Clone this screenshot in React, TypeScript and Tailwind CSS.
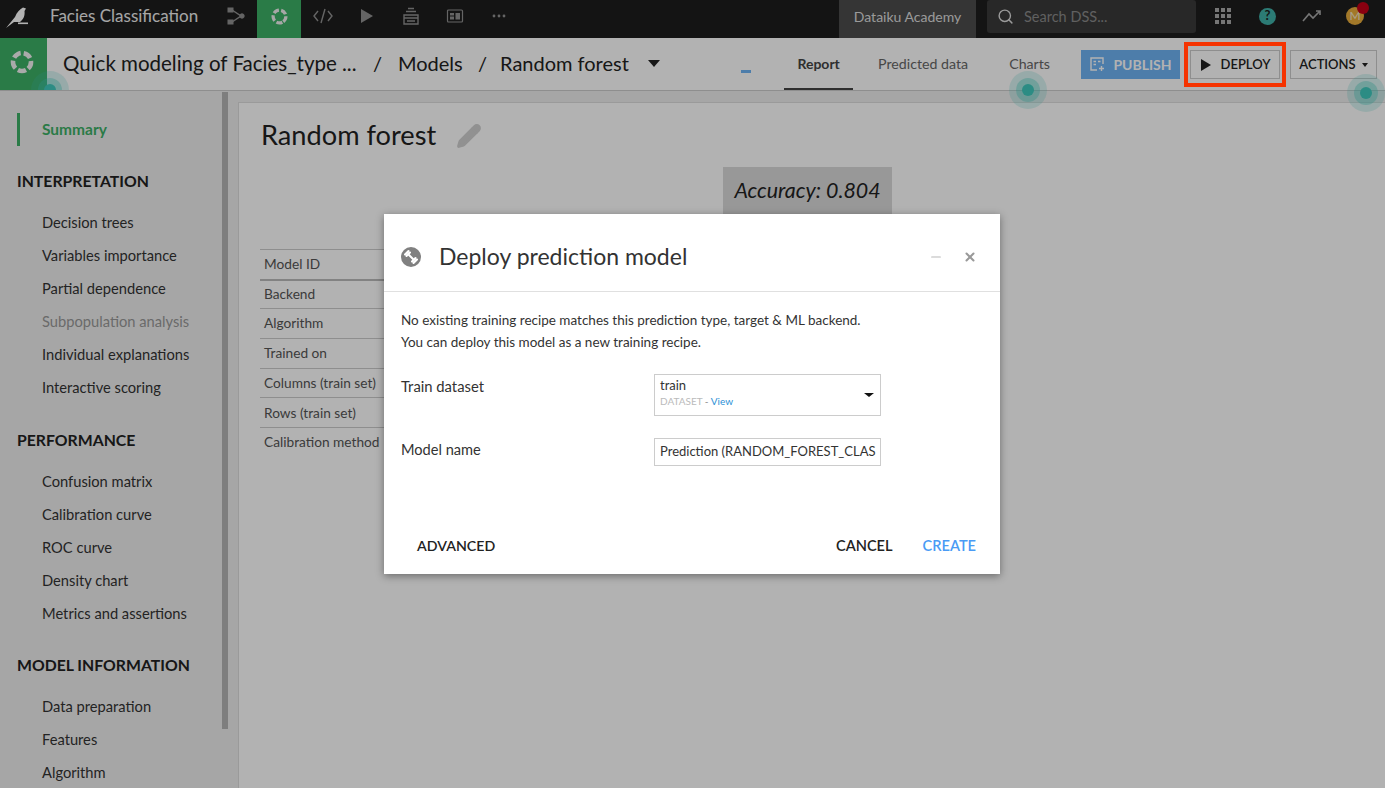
import { Search, Pencil, X, Minus } from "lucide-react";

const font = { fontFamily: 'Lato, "Noto Sans", sans-serif' };

type NavGroup = { title: string; items: string[] };

const NAV: NavGroup[] = [
  {
    title: "INTERPRETATION",
    items: [
      "Decision trees",
      "Variables importance",
      "Partial dependence",
      "Subpopulation analysis",
      "Individual explanations",
      "Interactive scoring",
    ],
  },
  {
    title: "PERFORMANCE",
    items: ["Confusion matrix", "Calibration curve", "ROC curve", "Density chart", "Metrics and assertions"],
  },
  {
    title: "MODEL INFORMATION",
    items: ["Data preparation", "Features", "Algorithm"],
  },
];

const ROWS = [
  "Model ID",
  "Backend",
  "Algorithm",
  "Trained on",
  "Columns (train set)",
  "Rows (train set)",
  "Calibration method",
];

function RingIcon({ size, color }: { size: number; color: string }) {
  return (
    <svg width={size} height={size} viewBox="0 0 24 24" fill="none" stroke={color} strokeWidth="4.6">
      <circle cx="12" cy="12" r="9" strokeDasharray="8.3 3.01" transform="rotate(63.6 12 12)" />
    </svg>
  );
}

function Hotspot({ className }: { className: string }) {
  return (
    <div className={`absolute w-[38px] h-[38px] rounded-full bg-[#40c9bd]/20 flex items-center justify-center ${className}`}>
      <div className="w-[24px] h-[24px] rounded-full bg-[#40c9bd]/35 flex items-center justify-center">
        <div className="w-[12px] h-[12px] rounded-full bg-[#40c9bd]" />
      </div>
    </div>
  );
}

function TopBar() {
  return (
    <div className="h-[38px] bg-[#1e1e1e] flex items-center text-[#eeeeee] shrink-0">
      <div className="w-[50px] h-[38px] shrink-0 flex items-start pl-[5px] pt-[5px]">
        <svg width="26" height="26" viewBox="5 5 26 26" fill="#ffffff">
          <path d="M6 28 L15 17 C17 12 20 9 23 7.5 L26 8.5 L24.5 11 C25 15 24 19 20 22 L14 22 Z" />
          <rect x="18" y="22.5" width="10" height="1.6" />
        </svg>
      </div>
      <span className="text-[17px] w-[168px] pb-[6px] whitespace-nowrap">Facies Classification</span>
      <div className="w-[39px] flex justify-center pb-[6px]">
        <svg className="mr-[3px]" width="18" height="18" viewBox="0 0 18 18" fill="#919191" stroke="#919191">
          <rect x="1" y="1" width="5" height="4" />
          <rect x="1" y="13" width="5" height="4" />
          <circle cx="15" cy="9" r="2.2" />
          <path d="M5 3 L14 9 L5 15" fill="none" strokeWidth="1.5" />
        </svg>
      </div>
      <div className="w-[44px] h-[38px] bg-[#3db066] flex items-center justify-center pb-[6px]">
        <RingIcon size={17} color="#f0f0f0" />
      </div>
      <div className="w-[44px] flex justify-center pb-[6px]">
        <svg width="20" height="16" viewBox="0 0 20 16" fill="none" stroke="#919191" strokeWidth="1.4">
          <path d="M5 3 L1 8 L5 13 M15 3 L19 8 L15 13 M12 1 L8 15" />
        </svg>
      </div>
      <div className="w-[44px] flex justify-center pb-[6px]">
        <svg width="14" height="16" viewBox="0 0 14 16" fill="#919191">
          <path d="M1 1 L13 8 L1 15 Z" />
        </svg>
      </div>
      <div className="w-[44px] flex justify-center pb-[6px]">
        <svg width="18" height="18" viewBox="0 0 18 18" fill="none" stroke="#919191" strokeWidth="1.4">
          <path d="M6 1.5 H12 M4 4.5 H14" />
          <path d="M2 8 H16 V17 H2 Z" />
          <path d="M2 11 H16 M5 14 H13" />
        </svg>
      </div>
      <div className="w-[44px] flex justify-center pb-[6px]">
        <svg width="18" height="16" viewBox="0 0 18 16" fill="#919191" stroke="#919191" strokeWidth="1.2">
          <rect x="1.5" y="2" width="15" height="12" rx="1" fill="none" />
          <rect x="4" y="5" width="4" height="2.5" stroke="none" />
          <rect x="4" y="8.5" width="4" height="3" stroke="none" />
          <rect x="9.5" y="5" width="4.5" height="6.5" stroke="none" />
        </svg>
      </div>
      <div className="w-[44px] flex justify-center pb-[6px]">
        <svg width="14" height="4" viewBox="0 0 14 4" fill="#919191">
          <circle cx="2" cy="2" r="1.4" />
          <circle cx="7" cy="2" r="1.4" />
          <circle cx="12" cy="2" r="1.4" />
        </svg>
      </div>
      <div className="flex-1" />
      <div className="w-[137px] h-[38px] bg-[#4d4d4d] flex items-center justify-center text-[14px] text-[#dddddd] pb-[6px]">
        Dataiku Academy
      </div>
      <div className="w-[209px] h-[33px] ml-[11px] mb-[5px] bg-[#3a3a3a] rounded-[3px] flex items-center pl-[10px] text-[14.5px] text-[#8a8a8a]">
        <Search size={17} color="#dddddd" strokeWidth={2} />
        <span className="ml-[10px]">Search DSS...</span>
      </div>
      <div className="w-[189px] flex items-center pl-[19px] pb-[6px]">
        <div className="grid grid-cols-3 gap-[2px] w-[16px] shrink-0">
          {Array.from({ length: 9 }).map((_, i) => (
            <div key={i} className="w-[4px] h-[4px] bg-[#aaaaaa]" />
          ))}
        </div>
        <div className="ml-[28px] w-[17px] h-[17px] rounded-full bg-[#3fb0a8] flex items-center justify-center text-[13px] font-bold text-[#1e1e1e] shrink-0">?</div>
        <svg className="ml-[26px] shrink-0" width="20" height="14" viewBox="0 0 20 14" fill="none" stroke="#aaaaaa" strokeWidth="1.6">
          <path d="M1 12 L7 5 L11 9 L18 2 M14 2 H18 V6" />
        </svg>
        <div className="relative ml-[24px] w-[18px] h-[18px] rounded-full bg-[#e8ad3c] text-[12px] text-[#f4ead0] flex items-center justify-center shrink-0">
          M
          <div className="absolute -top-[5px] -right-[5px] w-[12px] h-[12px] rounded-full bg-[#c50018]" />
        </div>
      </div>
    </div>
  );
}

function Header() {
  return (
    <div className="h-[53px] bg-white border-b border-[#cccccc] flex items-center relative shrink-0 overflow-hidden">
      <div className="w-[47px] h-[52px] bg-[#3db066] flex items-center justify-center shrink-0 self-start pb-[4px] pr-[3px]">
        <RingIcon size={24} color="#f4f4f4" />
      </div>
      <Hotspot className="left-[31px] top-[33px]" />
      <div className="flex items-center pb-[2px] text-[20px] text-[#222222]">
        <span className="text-[20.5px] ml-[16px] w-[310px] whitespace-nowrap">Quick modeling of Facies_type ...</span>
        <span className="w-[25px]">/</span>
        <span className="w-[80px]">Models</span>
        <span className="w-[22px]">/</span>
        <span>Random forest</span>
        <div className="ml-[19px] w-0 h-0 border-x-[6.5px] border-x-transparent border-t-[7px] border-t-[#222222]" />
      </div>
      <div className="flex-1" />
      <div className="w-[10px] h-[3px] bg-[#6fb3f4] mr-[33px] mt-[14px]" />
      <div className="h-[52px] w-[69px] border-b-2 border-[#444444] flex items-center justify-center text-[14px] font-bold text-[#444444]">Report</div>
      <span className="text-[14.2px] text-[#666666] ml-[25px]">Predicted data</span>
      <span className="text-[14.2px] text-[#666666] ml-[41px] mr-[31px]">Charts</span>
      <div className="w-[99px] h-[29px] bg-[#6fb3f4] flex items-center justify-center gap-[8px] text-white text-[14px] font-bold">
        <svg width="16" height="16" viewBox="0 0 16 16" fill="none" stroke="#ffffff" strokeWidth="1.4">
          <path d="M8 14 H2 V2 H14 V8" />
          <path d="M4.5 5.5 H7 M9 5.5 H11.5 M4.5 8.5 H7 M12.5 10 V15 M10 12.5 H15" />
        </svg>
        PUBLISH
      </div>
      <div className="w-[90px] h-[29px] ml-[10px] border border-[#cccccc] flex items-center justify-center gap-[10px] pt-[1px] text-[13px] font-semibold text-[#222222]">
        <svg width="11" height="12" viewBox="0 0 11 12" fill="#222222">
          <path d="M1 0 L11 6 L1 12 Z" />
        </svg>
        DEPLOY
      </div>
      <div className="w-[87px] h-[29px] ml-[10px] mr-[8px] border border-[#cccccc] flex items-center justify-center gap-[6px] pt-[1px] text-[13px] font-semibold text-[#222222]">
        ACTIONS
        <div className="w-0 h-0 border-x-[3.5px] border-x-transparent border-t-[4px] border-t-[#222222]" />
      </div>
    </div>
  );
}

function Sidebar() {
  return (
    <div className="w-[228px] shrink-0 flex bg-[#eeeeee]">
      <div className="w-[222px] pt-[22px]">
        <div className="h-[33px] ml-[17px] border-l-[3px] border-[#3db066] flex items-center pl-[22px] text-[15.5px] font-bold text-[#3db066]">
          Summary
        </div>
        {NAV.map((g) => (
          <div key={g.title}>
            <div className="ml-[17px] mt-[25px] mb-[15.6px] h-[20px] flex items-center text-[15.8px] font-bold text-[#222222] whitespace-nowrap">
              {g.title}
            </div>
            {g.items.map((it) => (
              <div
                key={it}
                className={`ml-[42px] h-[33px] pb-[2px] flex items-center text-[14.7px] whitespace-nowrap ${
                  it === "Subpopulation analysis" ? "text-[#999999]" : "text-[#333333]"
                }`}
              >
                {it}
              </div>
            ))}
          </div>
        ))}
      </div>
      <div className="w-[6px] h-[637px] mt-[1px] bg-[#b5b5b5]" />
    </div>
  );
}

function Content() {
  return (
    <div className="flex-1 bg-[#eeeeee] pl-[10px] pt-[11px] min-w-0">
      <div className="h-full bg-white border-l border-t border-[#dddddd] pl-[22px]">
        <div className="flex items-center pt-[11px] h-[54px]">
          <span className="text-[27.2px] text-[#222222] whitespace-nowrap">Random forest</span>
          <Pencil size={26} className="ml-[20px]" fill="#d0d0d0" color="#d0d0d0" />
        </div>
        <div className="h-[47px] w-[169px] ml-[462px] mt-[10px] bg-[#dadada] flex items-center justify-center italic text-[21.4px] text-[#222222] whitespace-nowrap pb-[1px]">
          Accuracy: 0.804
        </div>
        <div className="mt-[35px] w-[130px] -ml-[1px]">
          {ROWS.map((r, i) => (
            <div
              key={r}
              className={`h-[29.7px] flex items-center pl-[4px] text-[13.7px] text-[#555555] whitespace-nowrap ${
                i === 1 ? "border-t-2 border-[#bbbbbb]" : "border-t border-[#cccccc]"
              }`}
            >
              {r}
            </div>
          ))}
        </div>
      </div>
    </div>
  );
}

function DeployModal() {
  return (
    <div className="absolute left-[384px] top-[214px] w-[616px] h-[360px] bg-white shadow-[0_2px_8px_rgba(0,0,0,0.4)] flex flex-col">
      <div className="h-[78px] border-b border-[#e0e0e0] flex items-center pl-[17px] pr-[23px] pt-[8px] shrink-0">
        <svg width="20" height="20" viewBox="0 0 20 20">
          <circle cx="10" cy="10" r="10" fill="#808080" />
          <path d="M7 7 L13 13" stroke="#ffffff" strokeWidth="2" />
          <path d="M4 7.5 L7.5 4 M5.5 9 L9 5.5 M11 14.5 L14.5 11 M12.5 16 L16 12.5" stroke="#ffffff" strokeWidth="2" strokeLinecap="round" />
        </svg>
        <span className="ml-[18px] text-[23px] text-[#333333] whitespace-nowrap">Deploy prediction model</span>
        <div className="flex-1" />
        <Minus size={14} color="#d0d0d0" strokeWidth={3} />
        <X size={14} color="#999999" strokeWidth={3.5} className="ml-[20px]" />
      </div>
      <div className="pl-[17px] pt-[17px] text-[13.5px] leading-[22px] text-[#333333]">
        <p>No existing training recipe matches this prediction type, target &amp; ML backend.</p>
        <p>You can deploy this model as a new training recipe.</p>
      </div>
      <div className="pl-[17px] mt-[21px] flex h-[42px]">
        <span className="w-[253px] text-[14.8px] text-[#333333] pt-[1px]">Train dataset</span>
        <div className="w-[227px] h-[42px] border border-[#cccccc] flex items-center justify-between pl-[5px] pr-[6px]">
          <div className="pb-[3px]">
            <div className="text-[13px] leading-[16px] text-[#333333]">train</div>
            <div className="text-[10px] leading-[17px] text-[#bbbbbb]">
              DATASET <span className="text-[#888888]">-</span> <span className="text-[#2b8fd6]">View</span>
            </div>
          </div>
          <div className="w-0 h-0 border-x-[5px] border-x-transparent border-t-[4px] border-t-[#111111]" />
        </div>
      </div>
      <div className="pl-[17px] mt-[22px] flex h-[28px]">
        <span className="w-[253px] text-[14.6px] text-[#333333] pt-[1px]">Model name</span>
        <div className="w-[227px] h-[28px] border border-[#cccccc] flex items-center pl-[5px] text-[13px] text-[#333333] whitespace-nowrap">
          Prediction (RANDOM_FOREST_CLAS
        </div>
      </div>
      <div className="flex-1" />
      <div className="flex items-center pl-[33px] pr-[24px] pb-[17px] text-[14.6px] font-semibold">
        <span className="text-[14.2px] text-[#222222]">ADVANCED</span>
        <div className="flex-1" />
        <span className="text-[#222222]">CANCEL</span>
        <span className="text-[#4a9bf5] ml-[30px]">CREATE</span>
      </div>
    </div>
  );
}

export default function App() {
  return (
    <div className="relative w-[1385px] h-[788px] overflow-hidden" style={font}>
      <TopBar />
      <Header />
      <div className="flex h-[697px] bg-[#eeeeee]">
        <Sidebar />
        <Content />
      </div>

      <Hotspot className="left-[1009px] top-[71px]" />
      <Hotspot className="left-[1347px] top-[74px]" />

      {/* dim layer under the dialog */}
      <div className="absolute inset-0 bg-black/30" />

      <div className="absolute left-[1184px] top-[42px] w-[102px] h-[45px] border-[4px] border-[#f53300]" />

      <DeployModal />
    </div>
  );
}
